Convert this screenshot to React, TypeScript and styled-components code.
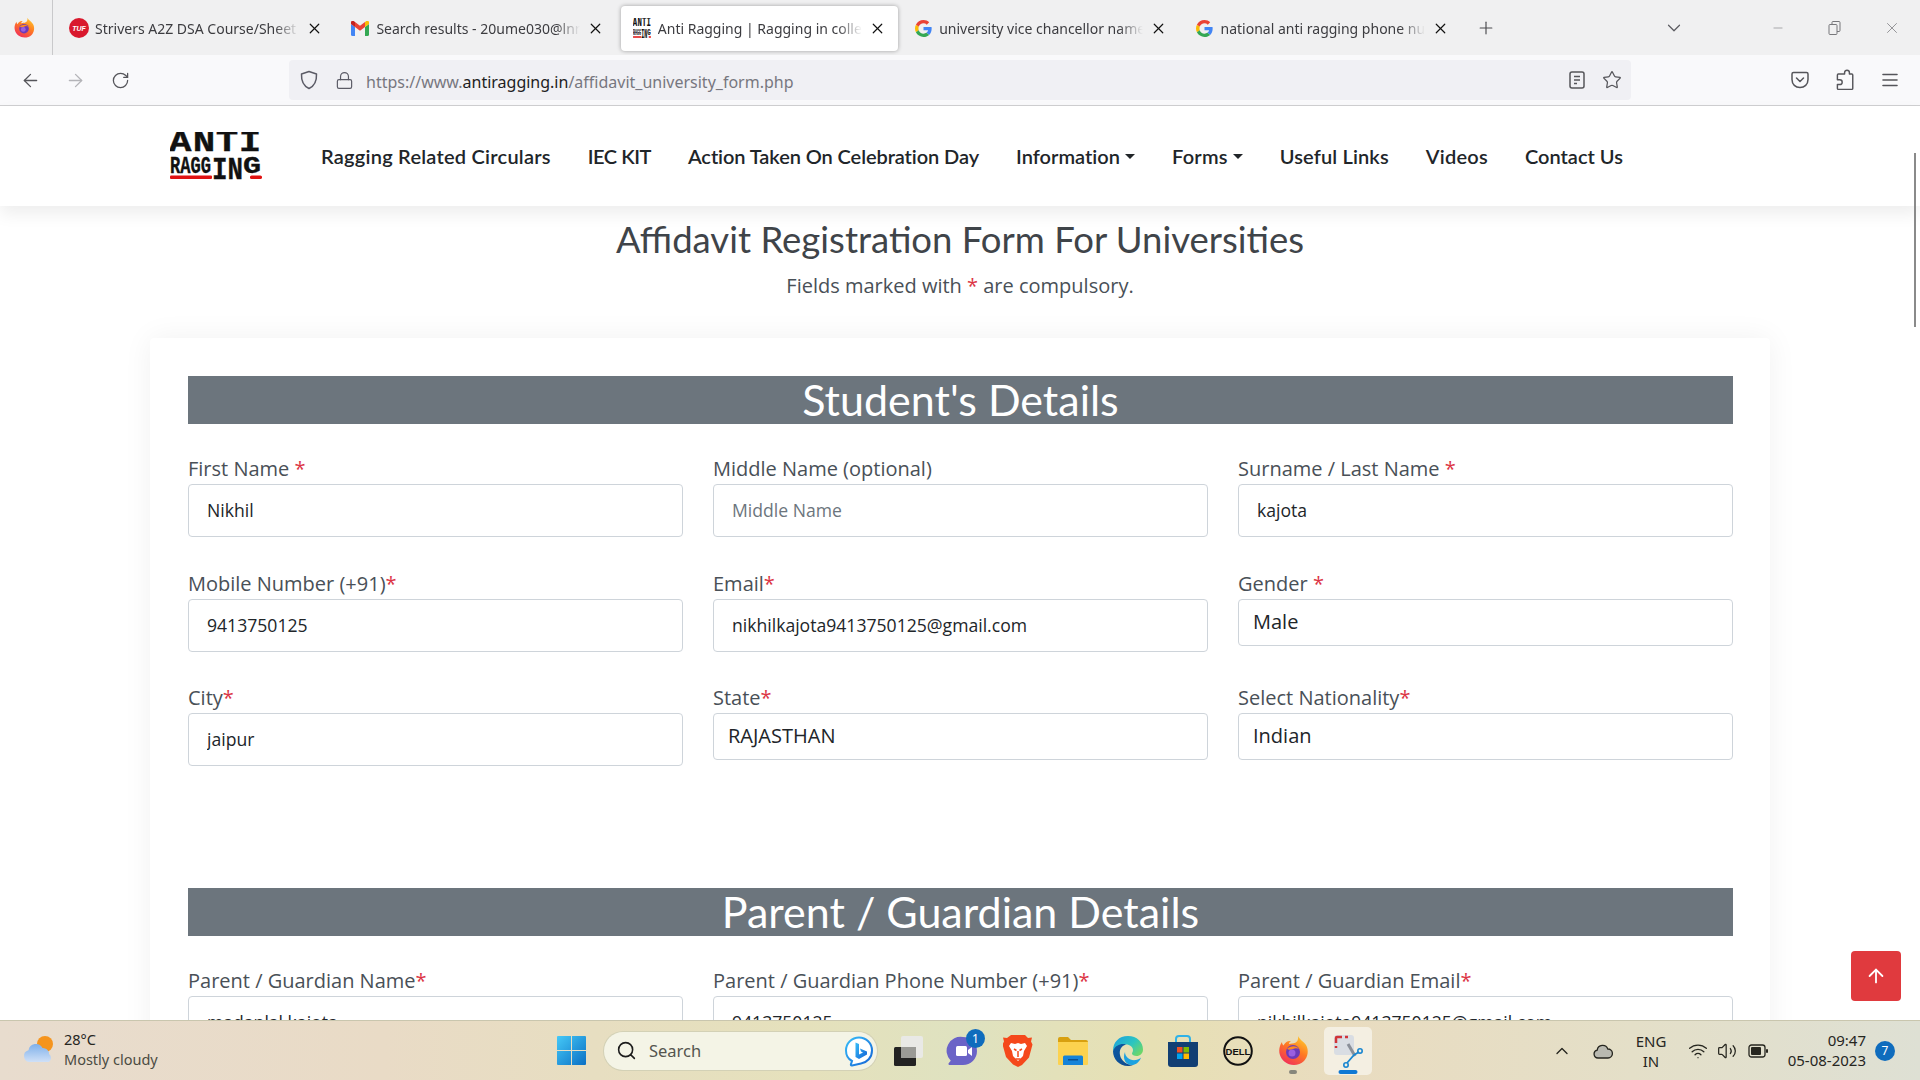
import React from 'react';
import styled, { createGlobalStyle } from 'styled-components';
import { ArrowLeft, ArrowRight, ArrowUp, ChevronDown, ChevronUp, Lock, Minus, Plus, RotateCw, Search, Star, Volume2, Wifi, X } from 'lucide-react';

const GlobalStyle = createGlobalStyle`
  html, body { margin: 0; padding: 0; height: 100%; overflow: hidden; background: #fff; }
  #root { height: 100%; }
  * { box-sizing: border-box; }
`;

const Screen = styled.div`
  position: relative;
  width: 1920px;
  height: 1080px;
  display: flex;
  flex-direction: column;
  overflow: hidden;
  font-family: 'Open Sans', sans-serif;
`;

const Glyph = styled.svg`
  flex: none;
`;

/* ---------- browser chrome ---------- */
const TabStrip = styled.div`
  height: 55px;
  flex: none;
  display: flex;
  align-items: center;
  background: #f0f0f1;
`;

const AppButton = styled.div`
  width: 53px;
  height: 55px;
  flex: none;
  display: flex;
  align-items: center;
  justify-content: center;
  padding-right: 5px;
  border-right: 1px solid #c9c9cb;
  margin-right: 5px;
`;

const Tabs = styled.div`
  display: flex;
  gap: 4.4px;
`;

const Tab = styled.div<{ $active?: boolean }>`
  width: 277px;
  height: 45px;
  margin-top: 1px;
  display: flex;
  align-items: center;
  gap: 7px;
  padding: 0 12px;
  border-radius: 4px;
  background: ${({ $active }) => ($active ? '#fff' : 'transparent')};
  box-shadow: ${({ $active }) => ($active ? '0 0 4px rgba(0,0,0,.35)' : 'none')};
`;

const TabIcon = styled.div`
  width: 18px;
  height: 20px;
  flex: none;
  display: flex;
  align-items: center;
  justify-content: center;
`;

const TabTitle = styled.div`
  flex: 1;
  min-width: 0;
  white-space: nowrap;
  overflow: hidden;
  font-family: 'Noto Sans', sans-serif;
  font-size: 14px;
  color: #3c3c40;
  -webkit-mask-image: linear-gradient(90deg, #000 88%, transparent 100%);
  mask-image: linear-gradient(90deg, #000 88%, transparent 100%);
`;

const TufBadge = styled.div`
  width: 20px;
  height: 20px;
  flex: none;
  border-radius: 50%;
  background: #d9182d;
  color: #fff;
  font: italic 700 7px 'Liberation Sans', sans-serif;
  display: flex;
  align-items: center;
  justify-content: center;
`;

const NewTab = styled.div`
  margin-left: 15px;
  width: 20px;
  display: flex;
  justify-content: center;
  color: #4a4a4f;
`;

const Chevron = styled.div`
  margin-left: auto;
  margin-right: 56px;
  width: 40px;
  display: flex;
  justify-content: center;
  color: #5a5a5f;
`;

const WindowButton = styled.div<{ $mr?: number }>`
  width: 56px;
  margin-right: ${({ $mr }) => $mr ?? 0}px;
  display: flex;
  justify-content: center;
  color: #77777b;
`;

const Toolbar = styled.div`
  height: 51px;
  flex: none;
  display: flex;
  align-items: center;
  padding: 0 8px;
  background: #f9f9fb;
  border-bottom: 1px solid #cfcfd1;
`;

const ToolButton = styled.div<{ $dim?: boolean }>`
  width: 45px;
  flex: none;
  display: flex;
  justify-content: center;
  color: ${({ $dim }) => ($dim ? '#b4b4b8' : '#55555a')};
`;

const UrlBar = styled.div`
  flex: 1;
  height: 40px;
  margin: 0 146px 0 146px;
  display: flex;
  align-items: center;
  padding: 0 2px 0 10px;
  background: #f0f0f4;
  border-radius: 4px;
`;

const UrlIcon = styled.div`
  width: 20px;
  display: flex;
  justify-content: center;
  color: #5b5b66;
  margin-right: 15px;
`;

const UrlText = styled.div`
  flex: 1;
  margin-left: -3px;
  padding-top: 3px;
  font-family: 'Noto Sans', sans-serif;
  font-size: 16px;
  color: #77777f;
  b { font-weight: 400; color: #1d1d22; }
`;

const UrlAction = styled.div`
  width: 35px;
  display: flex;
  justify-content: center;
  color: #55555a;
`;

/* ---------- site header ---------- */
const SiteNav = styled.nav`
  position: relative;
  z-index: 2;
  height: 100px;
  flex: none;
  display: flex;
  align-items: center;
  padding-left: 170px;
  background: #fff;
  box-shadow: 0 8px 16px rgba(0, 0, 0, 0.07);
`;

const NavLinks = styled.div`
  margin-left: 59px;
  display: flex;
  gap: 37px;
`;

const NavLink = styled.a<{ $track: number }>`
  display: flex;
  align-items: center;
  font-family: 'Lato', sans-serif;
  font-weight: 600;
  font-size: 20px;
  letter-spacing: ${({ $track }) => $track}px;
  color: #212529;
  white-space: nowrap;
`;

const Caret = styled.span`
  margin-left: 5px;
  border-top: 5px solid #212529;
  border-left: 5px solid transparent;
  border-right: 5px solid transparent;
`;

/* ---------- page ---------- */
const Main = styled.main`
  flex: 1;
  min-height: 0;
  overflow: hidden;
  padding: 0 150px;
  background: #fff;
`;

const PageTitle = styled.h1`
  margin: 11px 0 0;
  height: 44px;
  line-height: 44px;
  text-align: center;
  font-family: 'Lato', sans-serif;
  font-weight: 400;
  font-size: 36.5px;
  color: #3f4449;
`;

const PageNote = styled.p`
  margin: 10px 0 0;
  height: 30px;
  line-height: 30px;
  text-align: center;
  font-size: 20px;
  color: #495057;
`;

const Card = styled.div`
  margin-top: 37px;
  padding: 38px 37px 38px 38px;
  height: 900px;
  background: #fff;
  box-shadow: 0 0 30px rgba(0, 0, 0, 0.06);
  border-radius: 4px;
`;

const SectionBar = styled.h2<{ $gap?: number }>`
  margin: ${({ $gap }) => $gap ?? 0}px 0 0;
  height: 48px;
  line-height: 48px;
  text-align: center;
  font-family: 'Lato', sans-serif;
  font-weight: 400;
  font-size: 43px;
  color: #fff;
  background: #6c757d;
`;

const FieldGrid = styled.div`
  margin-top: 29px;
  display: grid;
  grid-template-columns: repeat(3, 495px);
  column-gap: 30px;
  row-gap: 30.5px;
  align-items: start;
`;

const FieldLabel = styled.label`
  display: block;
  height: 31px;
  line-height: 32px;
  font-size: 20px;
  color: #495057;
  white-space: nowrap;
`;

const Req = styled.span`
  color: #dc3545;
`;

const TextInput = styled.input`
  display: block;
  width: 100%;
  height: 53px;
  padding: 0 18px 1px;
  border: 1px solid #ced4da;
  border-radius: 4px;
  background: #fff;
  outline: none;
  font-family: 'Open Sans', sans-serif;
  font-size: 17.6px;
  color: #212529;
  &::placeholder { color: #6c757d; opacity: 1; }
`;

const SelectBox = styled.select`
  display: block;
  width: 100%;
  height: 47px;
  padding: 0 14px 2px;
  border: 1px solid #ced4da;
  border-radius: 4px;
  background: #fff;
  outline: none;
  appearance: none;
  font-family: 'Open Sans', sans-serif;
  font-size: 20px;
  color: #212529;
`;

const ScrollThumb = styled.div`
  position: absolute;
  top: 153px;
  right: 4px;
  width: 2px;
  height: 174px;
  z-index: 3;
  background: #8a8a8a;
`;

const BackToTop = styled.button`
  position: absolute;
  left: 1851px;
  top: 951px;
  width: 50px;
  height: 50px;
  z-index: 3;
  border: 0;
  border-radius: 4px;
  background: #e03a3e;
  color: #fff;
  display: flex;
  align-items: center;
  justify-content: center;
`;

/* ---------- windows taskbar ---------- */
const Taskbar = styled.footer`
  position: relative;
  z-index: 4;
  height: 60px;
  flex: none;
  display: flex;
  align-items: center;
  border-top: 1px solid #c9c6ae;
  background: linear-gradient(90deg, #e8dcce 0%, #e9dbc6 20%, #e5e1bc 42%, #dfe2c0 50%, #e7e0b4 60%, #e9dcc0 70%, #e4dfc8 85%, #dee0d4 100%);
  font-family: 'Noto Sans', sans-serif;
  color: #26261f;
`;

const Weather = styled.div`
  width: 557px;
  flex: none;
  display: flex;
  align-items: center;
  gap: 7px;
  padding: 0 0 3px 23px;
`;

const WeatherText = styled.div`
  font-size: 14.5px;
  line-height: 20px;
  span { display: block; color: #4b4b42; }
`;

const SearchPill = styled.div`
  margin-left: 18px;
  width: 273px;
  height: 38px;
  flex: none;
  display: flex;
  align-items: center;
  padding: 0 2px 0 12px;
  border-radius: 19px;
  background: #f4f4e6;
  box-shadow: 0 0 0 1px #d3d1b6;
  font-size: 16.5px;
  color: #55554e;
`;

const SearchLabel = styled.span`
  margin-left: 12px;
  flex: 1;
`;

const AppIcons = styled.div`
  margin-left: 3px;
  display: flex;
  align-items: center;
`;

const AppCell = styled.div`
  position: relative;
  width: 55px;
  height: 48px;
  display: flex;
  align-items: center;
  justify-content: center;
`;

const SnipHighlight = styled.div`
  position: absolute;
  left: 3.5px;
  top: 0;
  width: 48px;
  height: 48px;
  border-radius: 5px;
  background: #f4efe2;
  display: flex;
  align-items: center;
  justify-content: center;
`;

const OpenDot = styled.div<{ $wide?: boolean }>`
  position: absolute;
  bottom: 1px;
  left: 50%;
  transform: translateX(-50%);
  width: ${({ $wide }) => ($wide ? 19 : 8)}px;
  height: 4px;
  border-radius: 2px;
  background: ${({ $wide }) => ($wide ? '#0f78d4' : '#87877c')};
`;

const CountBadge = styled.div`
  position: absolute;
  top: 2px;
  right: 5px;
  width: 19px;
  height: 19px;
  border-radius: 50%;
  background: #0f6cbd;
  color: #fff;
  font-size: 12px;
  line-height: 19px;
  text-align: center;
`;

const Tray = styled.div`
  margin-left: auto;
  padding-right: 25px;
  display: flex;
  align-items: center;
`;

const TrayCell = styled.div<{ $w: number; $ml?: number }>`
  width: ${({ $w }) => $w}px;
  margin-left: ${({ $ml }) => $ml ?? 0}px;
  display: flex;
  justify-content: center;
  color: #26261f;
`;

const LangText = styled.div`
  width: 54px;
  text-align: center;
  font-size: 15px;
  line-height: 20px;
`;

const Clock = styled.div`
  width: 90px;
  margin: 0 -1px 0 4px;
  padding-bottom: 2px;
  text-align: right;
  font-size: 15px;
  line-height: 20px;
`;

const NotifyBadge = styled.div`
  margin-left: 10px;
  width: 20px;
  height: 20px;
  border-radius: 50%;
  background: #0f6cbd;
  color: #fff;
  font-size: 12px;
  line-height: 20px;
  text-align: center;
`;

/* ---------- drawings ---------- */
function LogoMark({ width = 92, height = 48 }: { width?: number; height?: number }) {
  return (
    <Glyph width={width} height={height} viewBox="0 0 92 48" preserveAspectRatio="none">
      <g fontFamily="'Liberation Mono', monospace" fontWeight="700" fill="#111" stroke="#111" strokeWidth="0.35">
        <text x="-0.8 18.2 36.6 55" y="19" fontSize="30" transform="scale(1.25 1)">ANTI</text>
        <text x="0" y="41" fontSize="23" textLength="41" lengthAdjust="spacingAndGlyphs">RAGG</text>
        <text x="42" y="47" fontSize="31" textLength="31" lengthAdjust="spacingAndGlyphs">IN</text>
        <text x="73" y="41" fontSize="23" textLength="18" lengthAdjust="spacingAndGlyphs">G</text>
      </g>
      <rect x="0" y="43.5" width="42" height="3.6" rx="1" fill="#e01212" />
      <rect x="80" y="43.5" width="12" height="3.6" rx="1.6" fill="#e01212" />
    </Glyph>
  );
}

function GmailIcon() {
  return (
    <svg width="18" height="15" viewBox="0 0 18 15">
      <path d="M0 3v10.500A1.500 1.500 0 0 0 1.500 15H4V6z" fill="#4285f4" />
      <path d="M14 6v9h2.500a1.500 1.500 0 0 0 1.500-1.500V3z" fill="#34a853" />
      <path d="M4 6 9 9.800 14 6V1L9 4.800 4 1z" fill="#ea4335" />
      <path d="M0 3v.1L4 6V1L2.600.1A1.600 1.600 0 0 0 0 1.500z" fill="#c5221f" />
      <path d="M14 1v5l4-2.900V1.500A1.600 1.600 0 0 0 15.400.1z" fill="#fbbc04" />
    </svg>
  );
}

function GoogleIcon() {
  return (
    <svg width="17" height="17" viewBox="0 0 48 48">
      <path fill="#ea4335" d="M24 9.500c3.500 0 6.700 1.200 9.200 3.600l6.900-6.900C35.900 2.400 30.500 0 24 0 14.600 0 6.500 5.400 2.600 13.200l8 6.200C12.500 13.700 17.800 9.500 24 9.500z" />
      <path fill="#4285f4" d="M47 24.500c0-1.600-.1-3.100-.4-4.500H24v9h13c-.6 3-2.300 5.500-4.800 7.200l7.700 6C44.400 37.900 47 31.800 47 24.500z" />
      <path fill="#fbbc05" d="M10.600 28.600A14.500 14.500 0 0 1 9.800 24c0-1.600.3-3.200.8-4.600l-8-6.200A24 24 0 0 0 0 24c0 3.900.9 7.500 2.600 10.800z" />
      <path fill="#34a853" d="M24 48c6.500 0 11.900-2.100 15.900-5.800l-7.700-6c-2.200 1.400-4.900 2.300-8.200 2.300-6.200 0-11.500-4.200-13.400-9.900l-8 6.200C6.500 42.600 14.600 48 24 48z" />
    </svg>
  );
}

function FirefoxIcon({ size, id }: { size: number; id: string }) {
  return (
    <svg width={size} height={size} viewBox="0 0 32 32">
      <defs>
        <linearGradient id={id} x1="0.8" y1="0" x2="0.2" y2="1">
          <stop offset="0" stopColor="#ffcb2e" />
          <stop offset="0.45" stopColor="#ff7a22" />
          <stop offset="1" stopColor="#f02a5e" />
        </linearGradient>
      </defs>
      <path d="M21 1c1 3 5 5 8 9 3 5 2 12-2 16-5 5-14 5-19 1C3 23 1 17 3 11c.5-1.500 1-2.500 2-4 0 1.500.5 2.500 1.500 3.500C8 7.500 10.500 5.500 14 6c-1.500 1-2 2-2 3 4-1 10 0 9-8z" fill={`url(#${id})`} />
      <circle cx="16" cy="17" r="7" fill="#6d3ab8" />
      <path d="M10 14c3-3 9-4 12 0-2-1-4-1-6 0s-4 1-6 0z" fill="#ff8a1f" />
      <circle cx="15" cy="18" r="3.500" fill="#9a5fe0" />
    </svg>
  );
}

function ShieldIcon() {
  return (
    <svg width="20" height="20" viewBox="0 0 20 20" fill="none" stroke="currentColor" strokeWidth="1.500">
      <path d="M10 1.500 17.500 4c.3 6.500-1 11.500-7.500 14.500C3.500 15.500 2.200 10.500 2.500 4z" strokeLinejoin="round" />
    </svg>
  );
}

function ReaderIcon() {
  return (
    <svg width="18" height="20" viewBox="0 0 18 20" fill="none" stroke="currentColor" strokeWidth="1.500">
      <rect x="2" y="2" width="14" height="16" rx="2" />
      <path d="M6 6.500h6M6 10h6M6 13.500h3" />
    </svg>
  );
}

function PocketIcon() {
  return (
    <svg width="20" height="20" viewBox="0 0 20 20" fill="none" stroke="currentColor" strokeWidth="1.500">
      <path d="M3.500 2.500h13a1.500 1.500 0 0 1 1.500 1.500v5.500c0 5-3.500 8-8 8s-8-3-8-8V4a1.500 1.500 0 0 1 1.500-1.500z" />
      <path d="m6.500 8 3.500 3.500L13.500 8" strokeLinecap="round" strokeLinejoin="round" />
    </svg>
  );
}

function PuzzleIcon() {
  return (
    <svg width="20" height="22" viewBox="0 0 20 22" fill="none" stroke="currentColor" strokeWidth="1.500" strokeLinejoin="round">
      <path d="M10 5V3.500a2.500 2.500 0 0 1 5 0V5h2.500a1 1 0 0 1 1 1v14a1 1 0 0 1-1 1H3.500a1 1 0 0 1-1-1v-4H5a2.500 2.500 0 0 0 0-5H2.500V6a1 1 0 0 1 1-1z" transform="translate(0 .2) scale(.96)" />
    </svg>
  );
}

function MenuLines() {
  return (
    <svg width="18" height="16" viewBox="0 0 18 16" stroke="currentColor" strokeWidth="1.600" strokeLinecap="round">
      <path d="M2 2.500h14M2 8h14M2 13.500h14" />
    </svg>
  );
}

function RestoreIcon() {
  return (
    <svg width="13" height="14" viewBox="0 0 13 14" fill="none" stroke="currentColor" strokeWidth="1">
      <rect x="1" y="3.500" width="8" height="10" rx="1" />
      <path d="M4 3.500V1.500a1 1 0 0 1 1-1h6a1 1 0 0 1 1 1v8a1 1 0 0 1-1 1H9" />
    </svg>
  );
}

function WeatherIcon() {
  return (
    <svg width="34" height="34" viewBox="0 0 34 34">
      <defs>
        <linearGradient id="cloudFill" x1="0" y1="0" x2="0" y2="1">
          <stop offset="0" stopColor="#7fb0ea" />
          <stop offset="1" stopColor="#cfe0f7" />
        </linearGradient>
      </defs>
      <circle cx="22" cy="12" r="8" fill="#f5941d" />
      <path d="M8 30a6 6 0 0 1-1.500-11.800A7.500 7.500 0 0 1 20.500 16 6 6 0 0 1 27 22a5 5 0 0 1 0 8z" fill="url(#cloudFill)" transform="translate(-1 0)" />
    </svg>
  );
}

function WindowsLogo() {
  return (
    <Glyph width="29" height="29" viewBox="0 0 29 29">
      <defs>
        <linearGradient id="winFill" x1="0" y1="0" x2="1" y2="1">
          <stop offset="0" stopColor="#45c9f7" />
          <stop offset="1" stopColor="#0a6fc4" />
        </linearGradient>
      </defs>
      <path d="M0 1a1 1 0 0 1 1-1h13v14H0zM15 0h13a1 1 0 0 1 1 1v13H15zM0 15h14v14H1a1 1 0 0 1-1-1zM15 15h14v13a1 1 0 0 1-1 1H15z" fill="url(#winFill)" />
    </Glyph>
  );
}

function BingIcon() {
  return (
    <Glyph width="32" height="32" viewBox="0 0 32 32">
      <defs>
        <linearGradient id="bingFill" x1="0" y1="0" x2="1" y2="1">
          <stop offset="0" stopColor="#37bdf8" />
          <stop offset="1" stopColor="#1463d6" />
        </linearGradient>
      </defs>
      <path d="M16 2.500a13 13 0 0 1 13 13c0 7-5 12-11 13l-9 2c-1 .2-1.500-.5-1-1.500l1-3C5 24 3 20 3 15.500a13 13 0 0 1 13-13z" fill="#fff" stroke="url(#bingFill)" strokeWidth="2" />
      <path d="M12.500 7.500 16 9v10.500l4-2-2-1-1-3 7 3v3l-8 4.500-3.500-2z" fill="url(#bingFill)" />
    </Glyph>
  );
}

function TaskViewIcon() {
  return (
    <svg width="30" height="30" viewBox="0 0 30 30">
      <rect x="1" y="11" width="22" height="19" rx="1.500" fill="#222" />
      <rect x="8" y="0" width="22" height="22" rx="2" fill="#e9e9e6" />
      <rect x="8" y="11" width="15" height="11" fill="#9a9a96" />
    </svg>
  );
}

function TeamsIcon() {
  return (
    <svg width="34" height="34" viewBox="0 0 34 34">
      <path d="M17 3a14 14 0 0 1 0 28H4c-1.500 0-2-1.200-1-2.200l1.800-2A14 14 0 0 1 17 3z" fill="#6a63c7" />
      <rect x="10" y="12" width="11" height="10" rx="1.500" fill="#fff" />
      <path d="m22 16 4-3v9l-4-3z" fill="#fff" />
    </svg>
  );
}

function BraveIcon() {
  return (
    <svg width="30" height="34" viewBox="0 0 30 34">
      <path d="M8 1h14l3 3 4-.5-1 4 1.500 3-3.500 13-7 7.500L15 33l-5-2.500L3 23-.5 10.500 1 7.500 0 3.500l4 .5z" fill="#f5481b" />
      <path d="M8 9l4 1 3-1 3 1 4-1 2 3-3 5-1 5-5 5-5-5-1-5-3-5z" fill="#fff" />
      <path d="M11 15l2.500 1.500M19 15l-2.500 1.500M15 17v6M12.500 25h5" stroke="#f5481b" strokeWidth="1.500" fill="none" />
    </svg>
  );
}

function FolderIcon() {
  return (
    <svg width="30" height="28" viewBox="0 0 30 28">
      <path d="M0 2a2 2 0 0 1 2-2h8l3 3h15a2 2 0 0 1 2 2v3H0z" fill="#d8a010" />
      <path d="M0 5h30v22a1 1 0 0 1-1 1H1a1 1 0 0 1-1-1z" fill="#fcd24f" />
      <path d="M5 20a1.500 1.500 0 0 1 1.500-1.500h17A1.500 1.500 0 0 1 25 20v8H5z" fill="#1583d8" />
      <rect x="10" y="22" width="10" height="1.500" fill="#0a4f90" />
    </svg>
  );
}

function EdgeIcon() {
  return (
    <svg width="30" height="30" viewBox="0 0 30 30">
      <defs>
        <linearGradient id="edgeA" x1="0" y1="0" x2="1" y2="0.7">
          <stop offset="0" stopColor="#1b9de2" />
          <stop offset="0.6" stopColor="#2bc5c0" />
          <stop offset="1" stopColor="#6bd66a" />
        </linearGradient>
        <linearGradient id="edgeB" x1="0" y1="0" x2="1" y2="1">
          <stop offset="0" stopColor="#0c59a4" />
          <stop offset="1" stopColor="#114a8b" />
        </linearGradient>
      </defs>
      <path d="M15 0c9 0 15 6 15 13.500 0 4-3 6.500-6.500 6.500-2.500 0-4.500-1-4.500-2.500 0-1 1-1.500 1-3.500 0-3-3-5.500-7-5.500C7 8.500 3 11 0 15 0 6 6 0 15 0z" fill="url(#edgeA)" />
      <path d="M0 15c2-5 6-7 10-7 2 0 3 .5 3 .5C8 10 6 14 7 19c1 6 7 10 13 10-2 .7-3.500 1-5 1C6 30 0 23 0 15z" fill="url(#edgeB)" />
      <path d="M12 16c0 5 5 9 11 8 2.500-.4 4-1.400 5-2.500-1.500 5-6 7.500-9 7.500-6 0-10-6-7-13z" fill="#1ca2e0" />
    </svg>
  );
}

function StoreIcon() {
  return (
    <svg width="30" height="32" viewBox="0 0 30 32">
      <path d="M8 8V4a3 3 0 0 1 3-3h8a3 3 0 0 1 3 3v4" fill="none" stroke="#2fb2e8" strokeWidth="2" />
      <path d="M0 7h30v22a3 3 0 0 1-3 3H3a3 3 0 0 1-3-3z" fill="#123f73" />
      <rect x="9" y="12" width="5.500" height="5.500" fill="#f25022" />
      <rect x="15.500" y="12" width="5.500" height="5.500" fill="#7fba00" />
      <rect x="9" y="18.500" width="5.500" height="5.500" fill="#00a4ef" />
      <rect x="15.500" y="18.500" width="5.500" height="5.500" fill="#ffb900" />
    </svg>
  );
}

function DellIcon() {
  return (
    <svg width="30" height="30" viewBox="0 0 30 30">
      <circle cx="15" cy="15" r="13.800" fill="none" stroke="#111" strokeWidth="2" />
      <text x="15" y="18.500" textAnchor="middle" fontFamily="'Liberation Sans', sans-serif" fontWeight="700" fontSize="9.500" fill="#111">DELL</text>
    </svg>
  );
}

function SnipIcon() {
  return (
    <svg width="30" height="34" viewBox="0 0 30 34">
      <rect x="1" y="1" width="20" height="20" rx="3" fill="#d9dde3" />
      <path d="M3 9V4a1 1 0 0 1 1-1h5M12 3h3" fill="none" stroke="#d13438" strokeWidth="2.500" />
      <path d="M3 12v2" fill="none" stroke="#d13438" strokeWidth="2.500" />
      <path d="M15 10 22 22" stroke="#8a8f98" strokeWidth="3" />
      <path d="m14 29 7-8 5-3" stroke="#1a86d0" strokeWidth="1.800" fill="none" />
      <circle cx="13" cy="31" r="2.200" fill="none" stroke="#1a86d0" strokeWidth="1.600" />
      <circle cx="27" cy="17" r="2.200" fill="none" stroke="#1a86d0" strokeWidth="1.600" />
    </svg>
  );
}

function CloudTray() {
  return (
    <svg width="20" height="16" viewBox="0 0 20 16">
      <path d="M5 15a4 4 0 0 1-.8-7.900A5.500 5.500 0 0 1 14.800 6 4.500 4.500 0 0 1 15 15z" fill="#b9b9b0" stroke="#26261f" strokeWidth="1.300" />
    </svg>
  );
}

function BatteryIcon() {
  return (
    <svg width="21" height="14" viewBox="0 0 21 14">
      <rect x="1" y="1" width="16" height="12" rx="2.500" fill="none" stroke="#26261f" strokeWidth="1.300" />
      <rect x="3" y="3" width="10" height="8" rx="1" fill="#26261f" />
      <rect x="18" y="5" width="2" height="4" rx="1" fill="#26261f" />
    </svg>
  );
}

/* ---------- data ---------- */
const tabs = [
  { title: 'Strivers A2Z DSA Course/Sheet - Stri', icon: <TufBadge>TUF</TufBadge> },
  { title: 'Search results - 20ume030@lnmiit.ac.in', icon: <GmailIcon /> },
  { title: 'Anti Ragging | Ragging in colleges', icon: <LogoMark width={18} height={20} />, active: true },
  { title: 'university vice chancellor name - Go', icon: <GoogleIcon /> },
  { title: 'national anti ragging phone number', icon: <GoogleIcon /> },
];

// track evens out the width of each link, the site's font is not installed here
const navItems = [
  { label: 'Ragging Related Circulars', track: 0.24 },
  { label: 'IEC KIT', track: -0.46 },
  { label: 'Action Taken On Celebration Day', track: -0.08 },
  { label: 'Information', track: 0.02, menu: true },
  { label: 'Forms', track: 0.24, menu: true },
  { label: 'Useful Links', track: 0.14 },
  { label: 'Videos', track: 0.24 },
  { label: 'Contact Us', track: 0 },
];

type Field = { label: string; tight?: boolean; optional?: boolean; value?: string; placeholder?: string; select?: boolean };

const studentFields: Field[] = [
  { label: 'First Name', value: 'Nikhil' },
  { label: 'Middle Name (optional)', optional: true, placeholder: 'Middle Name' },
  { label: 'Surname / Last Name', value: 'kajota' },
  { label: 'Mobile Number (+91)', tight: true, value: '9413750125' },
  { label: 'Email', tight: true, value: 'nikhilkajota9413750125@gmail.com' },
  { label: 'Gender', value: 'Male', select: true },
  { label: 'City', tight: true, value: 'jaipur' },
  { label: 'State', tight: true, value: 'RAJASTHAN', select: true },
  { label: 'Select Nationality', tight: true, value: 'Indian', select: true },
];

const parentFields: Field[] = [
  { label: 'Parent / Guardian Name', tight: true, value: 'madanlal kajota' },
  { label: 'Parent / Guardian Phone Number (+91)', tight: true, value: '9413750125' },
  { label: 'Parent / Guardian Email', tight: true, value: 'nikhilkajota9413750125@gmail.com' },
];

function FormField({ field }: { field: Field }) {
  return (
    <div>
      <FieldLabel>
        {field.label}
        {!field.optional && <Req>{field.tight ? '*' : ' *'}</Req>}
      </FieldLabel>
      {field.select ? (
        <SelectBox defaultValue={field.value}>
          <option>{field.value}</option>
        </SelectBox>
      ) : (
        <TextInput readOnly value={field.value ?? ''} placeholder={field.placeholder} />
      )}
    </div>
  );
}

export default function App() {
  return (
    <Screen>
      <GlobalStyle />
      <TabStrip>
        <AppButton>
          <FirefoxIcon size={22} id="ffTab" />
        </AppButton>
        <Tabs>
          {tabs.map((tab) => (
            <Tab key={tab.title} $active={tab.active}>
              <TabIcon>{tab.icon}</TabIcon>
              <TabTitle>{tab.title}</TabTitle>
              <X size={17} color="#111" strokeWidth={1.7} />
            </Tab>
          ))}
        </Tabs>
        <NewTab>
          <Plus size={20} strokeWidth={1.4} />
        </NewTab>
        <Chevron>
          <ChevronDown size={22} strokeWidth={1.3} />
        </Chevron>
        <WindowButton>
          <Minus size={14} strokeWidth={1} />
        </WindowButton>
        <WindowButton $mr={2}>
          <RestoreIcon />
        </WindowButton>
        <WindowButton>
          <X size={18} strokeWidth={1} />
        </WindowButton>
      </TabStrip>

      <Toolbar>
        <ToolButton>
          <ArrowLeft size={21} strokeWidth={1.5} />
        </ToolButton>
        <ToolButton $dim>
          <ArrowRight size={21} strokeWidth={1.5} />
        </ToolButton>
        <ToolButton>
          <RotateCw size={19} strokeWidth={1.6} />
        </ToolButton>
        <UrlBar>
          <UrlIcon>
            <ShieldIcon />
          </UrlIcon>
          <UrlIcon>
            <Lock size={19} strokeWidth={1.5} />
          </UrlIcon>
          <UrlText>
            https://www.<b>antiragging.in</b>/affidavit_university_form.php
          </UrlText>
          <UrlAction>
            <ReaderIcon />
          </UrlAction>
          <UrlAction>
            <Star size={20} strokeWidth={1.5} />
          </UrlAction>
        </UrlBar>
        <ToolButton>
          <PocketIcon />
        </ToolButton>
        <ToolButton>
          <PuzzleIcon />
        </ToolButton>
        <ToolButton>
          <MenuLines />
        </ToolButton>
      </Toolbar>

      <SiteNav>
        <LogoMark />
        <NavLinks>
          {navItems.map((item) => (
            <NavLink key={item.label} $track={item.track}>
              {item.label}
              {item.menu && <Caret />}
            </NavLink>
          ))}
        </NavLinks>
      </SiteNav>

      <Main>
        <PageTitle>Affidavit Registration Form For Universities</PageTitle>
        <PageNote>
          Fields marked with <Req>*</Req> are compulsory.
        </PageNote>
        <Card>
          <SectionBar>Student's Details</SectionBar>
          <FieldGrid>
            {studentFields.map((field) => (
              <FormField key={field.label} field={field} />
            ))}
          </FieldGrid>
          <SectionBar $gap={122}>Parent / Guardian Details</SectionBar>
          <FieldGrid>
            {parentFields.map((field) => (
              <FormField key={field.label} field={field} />
            ))}
          </FieldGrid>
        </Card>
      </Main>

      <ScrollThumb />
      <BackToTop aria-label="Back to top">
        <ArrowUp size={22} strokeWidth={2} />
      </BackToTop>

      <Taskbar>
        <Weather>
          <WeatherIcon />
          <WeatherText>
            28°C
            <span>Mostly cloudy</span>
          </WeatherText>
        </Weather>
        <WindowsLogo />
        <SearchPill>
          <Search size={21} strokeWidth={1.8} color="#1c1c1c" />
          <SearchLabel>Search</SearchLabel>
          <BingIcon />
        </SearchPill>
        <AppIcons>
          <AppCell>
            <TaskViewIcon />
          </AppCell>
          <AppCell>
            <TeamsIcon />
            <CountBadge>1</CountBadge>
          </AppCell>
          <AppCell>
            <BraveIcon />
          </AppCell>
          <AppCell>
            <FolderIcon />
          </AppCell>
          <AppCell>
            <EdgeIcon />
          </AppCell>
          <AppCell>
            <StoreIcon />
          </AppCell>
          <AppCell>
            <DellIcon />
          </AppCell>
          <AppCell>
            <FirefoxIcon size={32} id="ffBar" />
            <OpenDot />
          </AppCell>
          <AppCell>
            <SnipHighlight>
              <SnipIcon />
            </SnipHighlight>
            <OpenDot $wide />
          </AppCell>
        </AppIcons>
        <Tray>
          <TrayCell $w={41}>
            <ChevronUp size={20} strokeWidth={1.6} />
          </TrayCell>
          <TrayCell $w={42}>
            <CloudTray />
          </TrayCell>
          <LangText>
            ENG
            <br />
            IN
          </LangText>
          <TrayCell $w={28} $ml={6}>
            <Wifi size={20} strokeWidth={1.6} />
          </TrayCell>
          <TrayCell $w={28} $ml={1}>
            <Volume2 size={20} strokeWidth={1.5} />
          </TrayCell>
          <TrayCell $w={28} $ml={3}>
            <BatteryIcon />
          </TrayCell>
          <Clock>
            09:47
            <br />
            05-08-2023
          </Clock>
          <NotifyBadge>7</NotifyBadge>
        </Tray>
      </Taskbar>
    </Screen>
  );
}
